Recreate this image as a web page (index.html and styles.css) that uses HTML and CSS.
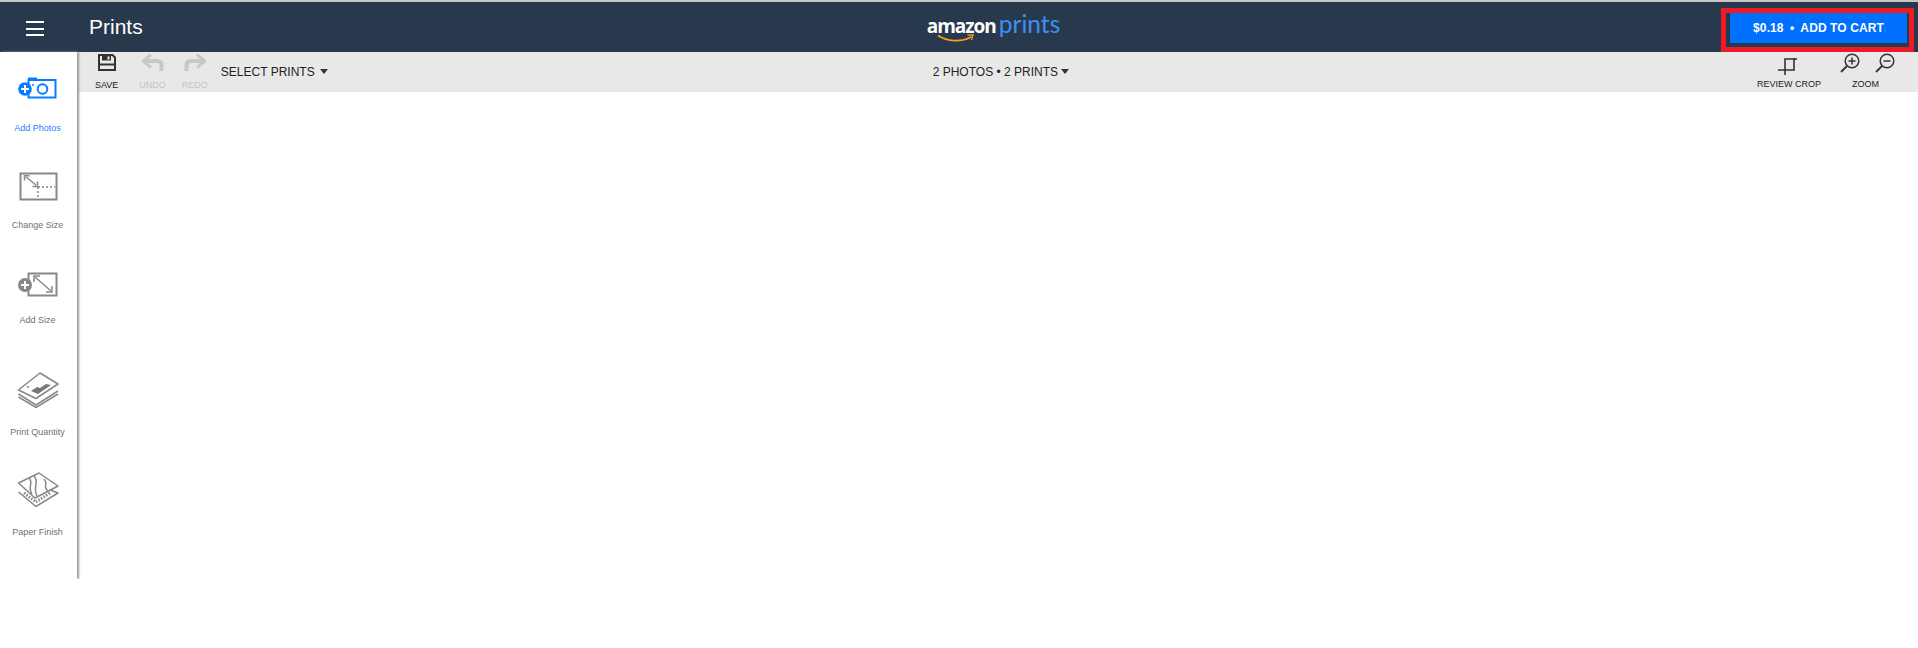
FILE: index.html
```html
<!DOCTYPE html>
<html lang="en">
<head>
	<meta charset="UTF-8">
	<meta name="viewport" content="width=device-width, initial-scale=1.0">
	<title>Prints</title>
	<link rel="stylesheet" href="styles.css">
</head>
<body>
	<header class="topbar">
		<div class="burger"><span></span><span></span><span></span></div>
		<div class="page-title">Prints</div>
		<div class="logo">
			<span class="logo-a">amazon</span><span class="logo-b">prints</span>
			<svg class="logo-smile" width="38" height="9" viewBox="0 0 38 9">
				<path d="M1 1.5C10 7.5 24 8.500 34 3" fill="none" stroke="#f7a11a" stroke-width="1.800"/>
				<path d="M30.500 1.200L36 1L34.500 6" fill="none" stroke="#f7a11a" stroke-width="1.300"/>
			</svg>
		</div>
		<div class="cart-mark">
			<button type="button" class="cart-btn">$0.18 <span class="cart-dot">•</span> ADD TO CART</button>
		</div>
	</header>
	<div class="main">
		<nav class="sidebar">
			<div class="side-item side-photos">
				<svg width="44" height="22" viewBox="0 0 44 22">
					<path d="M12 3V1.500H19V3" fill="none" stroke="#0a7cff" stroke-width="2"/>
					<rect x="11.500" y="3" width="27" height="17.500" fill="#fff" stroke="#0a7cff" stroke-width="2"/>
					<circle cx="25.500" cy="12" r="4.800" fill="none" stroke="#0a7cff" stroke-width="2"/>
					<circle cx="8" cy="12" r="6.800" fill="#0a7cff"/>
					<path d="M8 8V16M4 12H12" stroke="#fff" stroke-width="2"/>
					<circle cx="16" cy="8" r="1" fill="#0a7cff"/>
				</svg>
				<div class="side-label side-label-on">Add Photos</div>
			</div>
			<div class="side-item side-change">
				<svg width="44" height="29" viewBox="0 0 44 29">
					<rect x="3.500" y="1.500" width="36" height="26" fill="none" stroke="#888" stroke-width="2"/>
					<path d="M9 5L19 13" stroke="#888" stroke-width="1.500"/>
					<path d="M7.500 8.500V3.800H12.500M20.500 9.500V14.500H15.500" fill="none" stroke="#888" stroke-width="1.500"/>
					<path d="M21 15H38M21 15V27" fill="none" stroke="#888" stroke-width="1.500" stroke-dasharray="2 2"/>
				</svg>
				<div class="side-label">Change Size</div>
			</div>
			<div class="side-item side-add">
				<svg width="44" height="25" viewBox="0 0 44 25">
					<rect x="11.500" y="1.500" width="28" height="22" fill="none" stroke="#888" stroke-width="2"/>
					<path d="M18 5L34 19" stroke="#888" stroke-width="1.500"/>
					<path d="M17 10V4H23M35 14V20H29" fill="none" stroke="#888" stroke-width="1.500"/>
					<circle cx="8" cy="13" r="7" fill="#888"/>
					<path d="M8 9V17M4 13H12" stroke="#fff" stroke-width="2"/>
				</svg>
				<div class="side-label">Add Size</div>
			</div>
			<div class="side-item side-qty">
				<svg width="44" height="36" viewBox="0 0 44 36">
					<g fill="none" stroke="#888" stroke-width="1.500" stroke-linejoin="round">
						<path d="M1.500 22L19 33L41 19"/>
						<path d="M1.500 25L19 35.500L41 22"/>
						<path d="M23 1L41 12L19 26.500L1.500 18Z" fill="#fff"/>
					</g>
					<path d="M14 19L20 15L23 16L29 12L34 13L21 22Z" fill="#777"/>
					<circle cx="11" cy="15" r="1" fill="#888"/>
				</svg>
				<div class="side-label">Print Quantity</div>
			</div>
			<div class="side-item side-paper">
				<svg width="44" height="35" viewBox="0 0 44 35">
					<g fill="none" stroke="#888" stroke-width="1.500" stroke-linejoin="round">
						<path d="M1.500 20L19 34.500L41 21L33 18"/>
						<path d="M7 21L19 30L33 21" stroke-width="3" stroke-dasharray="1.500 1.500"/>
						<path d="M22 1L41 14L18 26L1.500 11Z" fill="#fff"/>
						<path d="M12 6C17 11 10 15 15 22"/>
						<path d="M17 4C23 10 15 15 20 24"/>
						<path d="M27 7C32 12 25 14 31 19"/>
					</g>
				</svg>
				<div class="side-label">Paper Finish</div>
			</div>
		</nav>
		<div class="workspace">
			<div class="toolbar">
				<div class="tool tool-save">
					<svg width="18" height="17" viewBox="0 0 18 17">
						<path d="M1 1H14.500L17 3.500V16H1Z" fill="none" stroke="#333" stroke-width="2"/>
						<path d="M4 1.500H13V6.500H4Z" fill="#333"/>
						<path d="M9.500 2.500H11.500V5.500H9.500Z" fill="#e8e8e8"/>
						<path d="M1 10.500H17" stroke="#333" stroke-width="2"/>
					</svg>
					<div class="tool-label">SAVE</div>
				</div>
				<div class="tool tool-off tool-undo">
					<svg width="22" height="17" viewBox="0 0 22 17">
						<path d="M19.500 17V11C19.500 8.500 18 7 15 7H3" fill="none" stroke="#c8c8c8" stroke-width="4"/>
						<path d="M9 0.500L1 7L9 13.500" fill="none" stroke="#c8c8c8" stroke-width="3"/>
					</svg>
					<div class="tool-label">UNDO</div>
				</div>
				<div class="tool tool-off tool-redo">
					<svg width="22" height="17" viewBox="0 0 22 17">
						<path d="M2.500 17V11C2.500 8.500 4 7 7 7H19" fill="none" stroke="#c8c8c8" stroke-width="4"/>
						<path d="M13 0.500L21 7L13 13.500" fill="none" stroke="#c8c8c8" stroke-width="3"/>
					</svg>
					<div class="tool-label">REDO</div>
				</div>
				<div class="drop drop-select">SELECT PRINTS<span class="caret"></span></div>
				<div class="drop drop-count">2 PHOTOS • 2 PRINTS<span class="caret caret-near"></span></div>
				<div class="tool tool-crop">
					<svg width="22" height="19" viewBox="0 0 22 19">
						<path d="M0 14H16V2M7 19V3H16" fill="none" stroke="#333" stroke-width="1.600"/>
						<path d="M16 3H19" stroke="#333" stroke-width="1.600"/>
					</svg>
					<div class="tool-label">REVIEW CROP</div>
				</div>
				<div class="tool tool-zoom">
					<div class="zoom-icons">
						<svg width="20" height="20" viewBox="0 0 20 20">
							<circle cx="12" cy="8" r="6.800" fill="none" stroke="#333" stroke-width="1.500"/>
							<path d="M7 13L1 19" stroke="#333" stroke-width="1.800"/>
							<path d="M12 4.500V11.500M8.500 8H15.500" stroke="#333" stroke-width="1.500"/>
						</svg>
						<svg width="20" height="20" viewBox="0 0 20 20">
							<circle cx="12" cy="8" r="6.800" fill="none" stroke="#333" stroke-width="1.500"/>
							<path d="M7 13L1 19" stroke="#333" stroke-width="1.800"/>
							<path d="M8.500 8H15.500" stroke="#333" stroke-width="1.500"/>
						</svg>
					</div>
					<div class="tool-label">ZOOM</div>
				</div>
			</div>
		</div>
	</div>
</body>
</html>
```

FILE: styles.css
```css
body {
	font-family: "Liberation Sans", Arial, sans-serif;
	margin: 0;
	background: white;
	overflow: hidden;
}
.topbar {
	display: flex;
	height: 50px;
	background: #29394d;
	border-top: 2px solid #c4c6c9;
}
.burger {
	display: flex;
	flex-direction: column;
	gap: 4.500px;
	width: 18px;
	margin: 19px 0 0 26px;
}
.burger span {
	height: 2px;
	background: white;
}
.page-title {
	margin: 12px 0 0 45px;
	color: white;
	font-size: 21px;
	line-height: 26px;
}
.logo {
	position: relative;
	display: flex;
	align-items: baseline;
	height: 40px;
	margin: 4px 0 0 784px;
}
.logo-a {
	color: white;
	font-family: "Open Sans", sans-serif;
	font-weight: 700;
	font-size: 19px;
	letter-spacing: -1px;
	line-height: 36px;
}
.logo-b {
	margin-left: 3px;
	color: #3f8ff2;
	font-family: "Lato", sans-serif;
	font-weight: 400;
	font-size: 24.500px;
	line-height: 36px;
}
.logo-smile {
	position: absolute;
	left: 10px;
	top: 28px;
}
.cart-mark {
	display: flex;
	margin: 6px 4px 0 auto;
	height: 32px;
	padding: 0 2px 2px 4px;
	border: 5px solid #ed1c24;
}
.cart-btn {
	width: 177px;
	height: 30px;
	padding: 0;
	border: none;
	background: #0070ff;
	color: white;
	font-family: inherit;
	font-size: 12px;
	font-weight: bold;
	letter-spacing: .1px;
}
.cart-dot {
	margin: 0 3px;
}
.main {
	display: flex;
	height: 527px;
}
.sidebar {
	z-index: 1;
	flex: none;
	width: 77px;
	padding-top: 25px;
	box-sizing: border-box;
	background: white;
	box-shadow: 2px 0 2px #999;
}
.side-item {
	display: flex;
	flex-direction: column;
	align-items: center;
}
.side-item svg {
	display: block;
}
.side-label {
	margin-right: 2px;
	color: #6c7178;
	font-size: 9px;
	line-height: 12px;
	white-space: nowrap;
}
.side-label-on {
	color: #1e82ff;
}
.side-photos {
	margin-bottom: 38px;
}
.side-photos svg {
	margin-bottom: 23px;
}
.side-change {
	margin-bottom: 41px;
}
.side-change svg {
	margin-bottom: 18px;
}
.side-add {
	margin-bottom: 46px;
}
.side-add svg {
	margin-bottom: 17px;
}
.side-qty {
	margin-bottom: 34px;
}
.side-qty svg {
	margin-bottom: 18px;
}
.side-paper svg {
	margin-bottom: 19px;
}
.workspace {
	flex: 1;
}
.toolbar {
	display: flex;
	height: 40px;
	background: #e8e8e8;
}
.tool {
	display: flex;
	flex-direction: column;
	align-items: center;
	padding-top: 2px;
}
.tool svg {
	display: block;
}
.tool-label {
	margin-top: 8px;
	color: #222;
	font-size: 9px;
	line-height: 12px;
	white-space: nowrap;
}
.tool-off .tool-label {
	color: #c4c4c4;
}
.tool-save {
	margin-left: 18px;
}
.tool-undo {
	margin-left: 21px;
}
.tool-redo {
	margin-left: 16px;
}
.drop {
	display: flex;
	align-items: center;
	height: 40px;
	color: #222;
	font-size: 12px;
	white-space: nowrap;
}
.drop-select {
	margin-left: 13px;
}
.drop-count {
	margin-left: 605px;
}
.caret {
	width: 0;
	height: 0;
	margin: 0 0 2px 5px;
	border-left: 4px solid transparent;
	border-right: 4px solid transparent;
	border-top: 5px solid #333;
}
.caret-near {
	margin-left: 3px;
}
.tool-crop {
	margin-left: auto;
	padding-top: 4px;
}
.tool-crop .tool-label {
	margin-top: 3px;
}
.tool-zoom {
	margin: 0 23px 0 19px;
	padding-top: 1px;
}
.tool-zoom .tool-label {
	margin: 5px 4px 0 0;
}
.zoom-icons {
	display: flex;
	gap: 15px;
}
```
